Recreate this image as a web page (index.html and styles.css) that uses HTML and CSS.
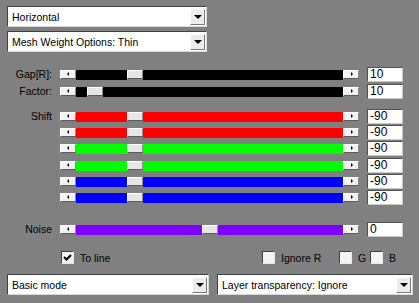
FILE: index.html
```html
<!DOCTYPE html>
<html lang="en">
<head>
  <meta charset="UTF-8">
  <title>Mesh</title>
  <link rel="stylesheet" href="styles.css">
</head>
<body>
  <div class="panel">
    <div class="combo top">Horizontal<span class="drop"><i></i></span></div>
    <div class="combo top second">Mesh Weight Options: Thin<span class="drop"><i></i></span></div>

    <div class="row gap-row">
      <span class="label">Gap[R]:</span>
      <div class="slider black">
        <span class="btn left"><i></i></span>
        <div class="track"><span class="fill" style="width:51px"></span><span class="thumb"></span><span class="fill rest"></span></div>
        <span class="btn right"><i></i></span>
      </div>
      <div class="num">10</div>
    </div>
    <div class="row factor-row">
      <span class="label">Factor:</span>
      <div class="slider black">
        <span class="btn left"><i></i></span>
        <div class="track"><span class="fill" style="width:11px"></span><span class="thumb"></span><span class="fill rest"></span></div>
        <span class="btn right"><i></i></span>
      </div>
      <div class="num">10</div>
    </div>

    <div class="shift">
      <div class="row">
        <span class="label">Shift</span>
        <div class="slider red">
          <span class="btn left"><i></i></span>
          <div class="track"><span class="fill" style="width:51px"></span><span class="thumb"></span><span class="fill rest"></span></div>
          <span class="btn right"><i></i></span>
        </div>
        <div class="num">-90</div>
      </div>
      <div class="row">
        <span class="label"></span>
        <div class="slider red">
          <span class="btn left"><i></i></span>
          <div class="track"><span class="fill" style="width:51px"></span><span class="thumb"></span><span class="fill rest"></span></div>
          <span class="btn right"><i></i></span>
        </div>
        <div class="num">-90</div>
      </div>
      <div class="row">
        <span class="label"></span>
        <div class="slider green">
          <span class="btn left"><i></i></span>
          <div class="track"><span class="fill" style="width:51px"></span><span class="thumb"></span><span class="fill rest"></span></div>
          <span class="btn right"><i></i></span>
        </div>
        <div class="num">-90</div>
      </div>
      <div class="row">
        <span class="label"></span>
        <div class="slider green">
          <span class="btn left"><i></i></span>
          <div class="track"><span class="fill" style="width:51px"></span><span class="thumb"></span><span class="fill rest"></span></div>
          <span class="btn right"><i></i></span>
        </div>
        <div class="num">-90</div>
      </div>
      <div class="row">
        <span class="label"></span>
        <div class="slider blue">
          <span class="btn left"><i></i></span>
          <div class="track"><span class="fill" style="width:51px"></span><span class="thumb"></span><span class="fill rest"></span></div>
          <span class="btn right"><i></i></span>
        </div>
        <div class="num">-90</div>
      </div>
      <div class="row">
        <span class="label"></span>
        <div class="slider blue">
          <span class="btn left"><i></i></span>
          <div class="track"><span class="fill" style="width:51px"></span><span class="thumb"></span><span class="fill rest"></span></div>
          <span class="btn right"><i></i></span>
        </div>
        <div class="num caret">-90</div>
      </div>
    </div>

    <div class="row noise-row">
      <span class="label">Noise</span>
      <div class="slider purple">
        <span class="btn left"><i></i></span>
        <div class="track"><span class="fill" style="width:126px"></span><span class="thumb"></span><span class="fill rest"></span></div>
        <span class="btn right"><i></i></span>
      </div>
      <div class="num">0</div>
    </div>

    <div class="checks">
      <label class="check to-line"><span class="box"><svg width="11" height="11" viewBox="0 0 11 11"><path d="M2 5 L4.5 7.5 L9 3" fill="none" stroke="#000" stroke-width="2"/></svg></span>To line</label>
      <label class="check ignore-r"><span class="box"></span>Ignore R</label>
      <label class="check ignore-g"><span class="box"></span>G</label>
      <label class="check"><span class="box"></span>B</label>
    </div>

    <div class="bottom">
      <div class="combo basic">Basic mode<span class="drop"><i></i></span></div>
      <div class="combo layer">Layer transparency: Ignore<span class="drop"><i></i></span></div>
    </div>
  </div>
</body>
</html>
```
FILE: styles.css
```css
* {
  margin: 0;
  padding: 0;
  box-sizing: border-box;
}

html, body {
  width: 419px;
  height: 303px;
  overflow: hidden;
}

body {
  background-color: #808080;
  font-family: "Liberation Sans", Arial, sans-serif;
  font-size: 10.5px;
  color: #000;
}

.panel {
  padding-top: 6px;
}

/* combo boxes */
.combo {
  display: flex;
  align-items: center;
  height: 21px;
  background-color: #fff;
  border: 1px solid;
  border-color: #404040 #d8d8d8 #d8d8d8 #404040;
  padding: 0 1px 0 4px;
  font-size: 10.5px;
}

.combo.top {
  margin-left: 7px;
  width: 200px;
}

.combo.second {
  margin-top: 4px;
}

.drop {
  margin-left: auto;
  width: 15px;
  height: 16px;
  background-color: #ececec;
  border: 1px solid;
  border-color: #fff #7a7a7a #7a7a7a #fff;
  display: flex;
  align-items: center;
  justify-content: center;
}

.drop i {
  display: block;
  width: 0;
  height: 0;
  border-left: 4px solid transparent;
  border-right: 4px solid transparent;
  border-top: 4px solid #000;
  margin-top: 1px;
}

/* slider rows */
.row {
  display: grid;
  grid-template-columns: 52px 299px 36px;
  column-gap: 8px;
  align-items: center;
  height: 15px;
}

.gap-row { margin-top: 15px; }
.factor-row { margin-top: 2px; }
.shift { margin-top: 10px; }
.shift .row { margin-top: 1px; }
.shift .row:first-child { margin-top: 0; }
.shift .row:nth-child(4) { margin-top: 2px; }
.noise-row { margin-top: 17px; }

.label {
  text-align: right;
  line-height: 15px;
}

.slider {
  display: flex;
  align-items: flex-start;
  height: 10px;
}

.btn, .thumb {
  width: 16px;
  height: 9px;
  flex: none;
  border: 1px solid;
  border-color: #fff #8a8a8a #5a5a5a #fff;
  background-color: #f2f2f2;
}

.btn {
  display: flex;
  align-items: center;
  justify-content: center;
}

.btn i {
  display: block;
  width: 0;
  height: 0;
  border-top: 2px solid transparent;
  border-bottom: 2px solid transparent;
}

.btn.left i { border-right: 2px solid #000; margin-left: -1px; }
.btn.right i { border-left: 2px solid #000; margin-left: 1px; }

.thumb {
  background-color: #e6e6e6;
}

.track {
  flex: 1;
  display: flex;
  height: 10px;
}

.fill {
  height: 10px;
  flex: none;
}

.fill.rest { flex: 1; }

.black .fill { background-color: #000; }
.red .fill { background-color: #ff0000; }
.green .fill { background-color: #00ff00; }
.blue .fill { background-color: #0000ff; }
.purple .fill { background-color: #8000ff; }

.num {
  height: 15px;
  background-color: #fff;
  border: 1px solid;
  border-color: #505050 #c8c8c8 #c8c8c8 #505050;
  padding-left: 2px;
  font-size: 12px;
  line-height: 13px;
}

.num.caret {
  border-left: 1px solid #505050;
}

/* check boxes */
.checks {
  display: flex;
  align-items: center;
  margin-top: 14px;
  padding-left: 61px;
  height: 13px;
}

.check {
  display: flex;
  align-items: center;
  gap: 6px;
}

.check.to-line { width: 201px; }
.check.ignore-r { width: 77px; }
.check.ignore-g { width: 31px; }

.box {
  width: 13px;
  height: 13px;
  flex: none;
  background-color: #f4f4f4;
  border: 1px solid;
  border-color: #404040 #e8e8e8 #e8e8e8 #404040;
  display: flex;
  align-items: center;
  justify-content: center;
}

/* bottom combos */
.bottom {
  display: flex;
  gap: 8px;
  margin-top: 10px;
  padding-left: 7px;
}

.combo.basic { width: 202px; }
.combo.layer { width: 196px; }
```
